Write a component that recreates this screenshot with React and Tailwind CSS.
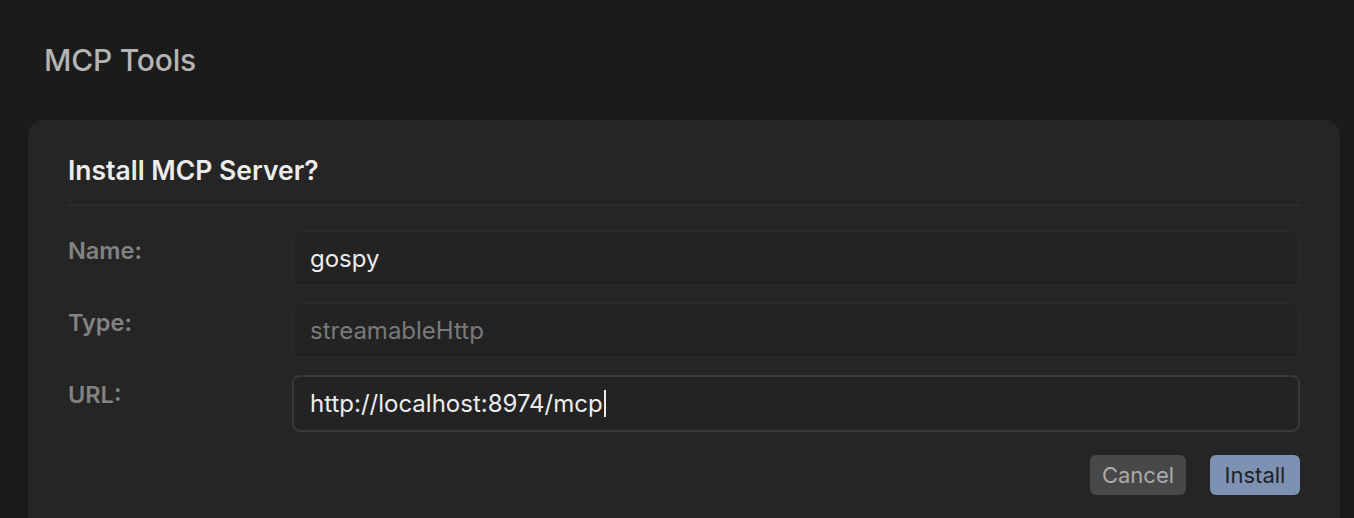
export default function App() {
  const font = { fontFamily: 'Inter, "Noto Sans", sans-serif' };
  return (
    <div className="w-[1354px] h-[518px] overflow-hidden bg-[#1b1b1b]" style={font}>
      <div className="pl-[44px] pt-[40px] h-[120px]">
        <h1 className="text-[30px] leading-[40px] font-medium text-[#b4b4b4] tracking-[-0.2px]">MCP Tools</h1>
      </div>
      <div className="ml-[28px] w-[1312px] h-[420px] rounded-[16px] bg-[#252525] px-[40px] pt-[34px]">
        <h2 className="text-[26.5px] leading-[32px] font-semibold text-[#ececec]">Install MCP Server?</h2>
        <div className="mt-[18px] h-[2px] bg-[#2d2d2d]"></div>
        <div className="mt-[25px] grid grid-cols-[224px_1fr] gap-y-[17px]">
          <div className="pt-[6px] text-[23.5px] leading-[28px] font-semibold text-[#828282]">Name:</div>
          <div className="h-[55px] rounded-[8px] border border-[#2c2c2c] bg-[#232323] px-[17px] flex items-center text-[24px] text-[#ececec]">gospy</div>
          <div className="pt-[6px] text-[23.5px] leading-[28px] font-semibold text-[#828282]">Type:</div>
          <div className="h-[55px] rounded-[8px] border border-[#2c2c2c] bg-[#232323] px-[17px] flex items-center text-[24px] text-[#7a7a7a]">streamableHttp</div>
          <div className="pt-[6px] text-[23.5px] leading-[28px] font-semibold text-[#828282]">URL:</div>
          <div className="h-[57px] rounded-[8px] border-2 border-[#333b3f] bg-[#232323] px-[16px] flex items-center text-[24px] text-[#ececec]">
            <span>http://localhost:8974/mcp</span>
            <span className="ml-[1px] w-[2px] h-[27px] bg-[#ececec]"></span>
          </div>
        </div>
        <div className="mt-[23px] flex justify-end gap-[24px]">
          <button className="w-[96px] h-[40px] rounded-[6px] bg-[#484848] text-[22px] text-[#ababab]">Cancel</button>
          <button className="w-[90px] h-[40px] rounded-[6px] bg-[#7d92b2] text-[22px] text-[#1e2229]">Install</button>
        </div>
      </div>
    </div>
  );
}
